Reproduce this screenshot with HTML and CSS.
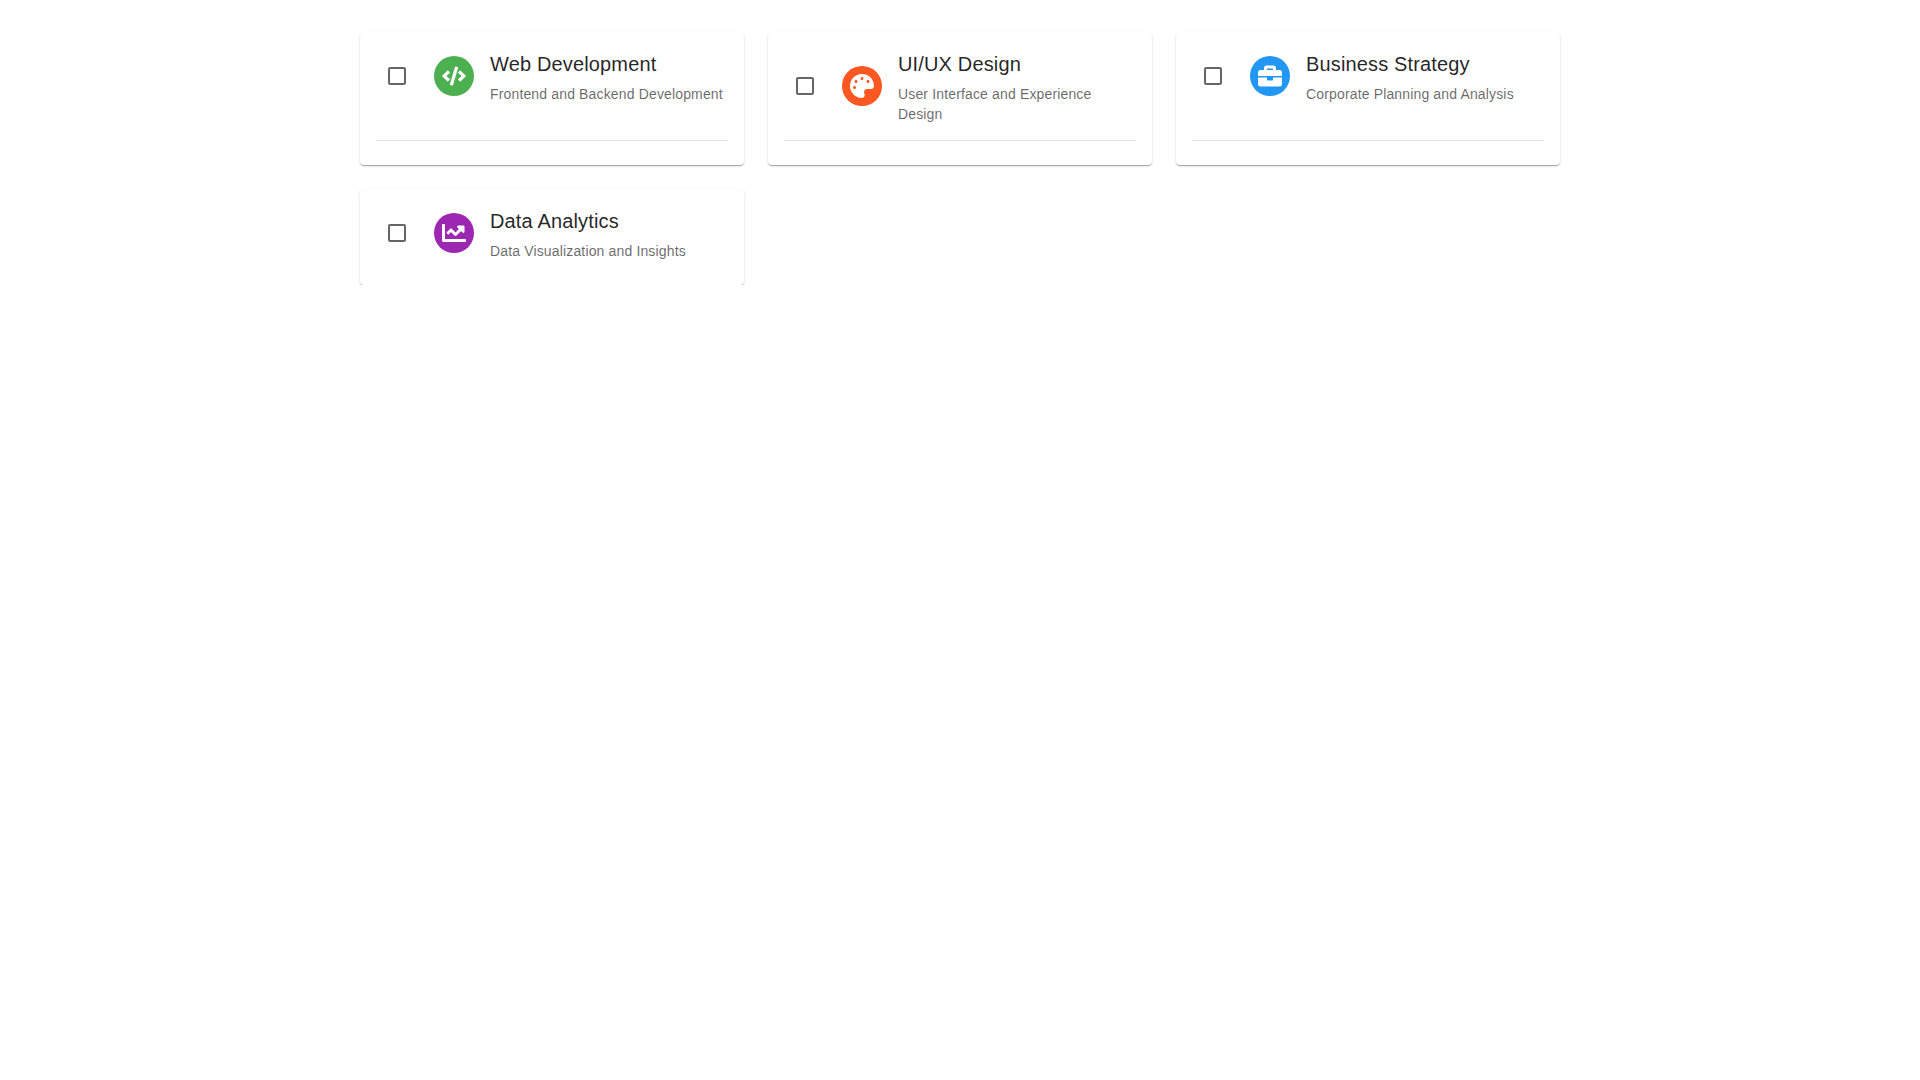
FILE: index.html
```html
<!DOCTYPE html>
<html lang="en">
<head>
<meta charset="utf-8">
<title>Skills</title>
<link rel="stylesheet" href="styles.css">
</head>
<body>
<main class="grid">
  <article class="card">
    <div class="row">
      <svg class="check" viewBox="0 0 24 24"><path d="M19 5v14H5V5h14m0-2H5c-1.1 0-2 .9-2 2v14c0 1.1.9 2 2 2h14c1.1 0 2-.9 2-2V5c0-1.1-.9-2-2-2z"/></svg>
      <div class="avatar green">
        <svg class="glyph" viewBox="0 0 640 512"><path d="M278.9 511.5l-61-17.7c-6.4-1.8-10-8.5-8.2-14.9L346.2 8.7c1.8-6.4 8.5-10 14.9-8.2l61 17.7c6.4 1.8 10 8.5 8.2 14.9L293.8 503.3c-1.9 6.4-8.5 10.1-14.9 8.2zm-114-112.2l43.5-46.4c4.6-4.9 4.3-12.7-.8-17.2L117 256l90.6-79.7c5.1-4.5 5.5-12.3.8-17.2l-43.5-46.4c-4.5-4.8-12.1-5.1-17-.5L3.8 247.2c-5.1 4.7-5.1 12.8 0 17.5l144.1 135.1c4.9 4.6 12.5 4.4 17-.5zm327.2.6l144.1-135.1c5.1-4.7 5.1-12.8 0-17.5L492.1 112.1c-4.8-4.5-12.4-4.3-17 .5L431.6 159c-4.6 4.9-4.3 12.7.8 17.2L523 256l-90.6 79.7c-5.1 4.5-5.5 12.3-.8 17.2l43.5 46.4c4.5 4.9 12.1 5.1 17 .6z"/></svg>
      </div>
      <div class="text">
        <h2 class="title">Web Development</h2>
        <p class="sub">Frontend and Backend Development</p>
      </div>
    </div>
    <hr class="divider">
  </article>
  <article class="card">
    <div class="row">
      <svg class="check" viewBox="0 0 24 24"><path d="M19 5v14H5V5h14m0-2H5c-1.1 0-2 .9-2 2v14c0 1.1.9 2 2 2h14c1.1 0 2-.9 2-2V5c0-1.1-.9-2-2-2z"/></svg>
      <div class="avatar orange">
        <svg class="glyph" viewBox="0 0 512 512"><path d="M204.3 5C104.9 24.4 24.8 104.3 5.2 203.4c-37 187 131.7 326.4 258.8 306.7 41.2-6.4 61.4-54.6 42.5-91.7-23.1-45.4 9.9-98.4 60.9-98.4h79.7c35.8 0 64.8-29.6 64.9-65.3C511.5 97.1 368.1-26.9 204.3 5zM96 320c-17.7 0-32-14.3-32-32s14.3-32 32-32 32 14.3 32 32-14.3 32-32 32zm32-128c-17.7 0-32-14.3-32-32s14.3-32 32-32 32 14.3 32 32-14.3 32-32 32zm128-64c-17.7 0-32-14.3-32-32s14.3-32 32-32 32 14.3 32 32-14.3 32-32 32zm128 64c-17.7 0-32-14.3-32-32s14.3-32 32-32 32 14.3 32 32-14.3 32-32 32z"/></svg>
      </div>
      <div class="text">
        <h2 class="title">UI/UX Design</h2>
        <p class="sub">User Interface and Experience Design</p>
      </div>
    </div>
    <hr class="divider">
  </article>
  <article class="card">
    <div class="row">
      <svg class="check" viewBox="0 0 24 24"><path d="M19 5v14H5V5h14m0-2H5c-1.1 0-2 .9-2 2v14c0 1.1.9 2 2 2h14c1.1 0 2-.9 2-2V5c0-1.1-.9-2-2-2z"/></svg>
      <div class="avatar blue">
        <svg class="glyph" viewBox="0 0 512 512"><path d="M320 336c0 8.84-7.16 16-16 16h-96c-8.84 0-16-7.16-16-16v-48H0v144c0 25.6 22.4 48 48 48h416c25.6 0 48-22.4 48-48V288H320v48zm144-208h-80V80c0-25.6-22.4-48-48-48H176c-25.6 0-48 22.4-48 48v48H48c-25.6 0-48 22.4-48 48v80h512v-80c0-25.6-22.4-48-48-48zm-144 0H192V96h128v32z"/></svg>
      </div>
      <div class="text">
        <h2 class="title">Business Strategy</h2>
        <p class="sub">Corporate Planning and Analysis</p>
      </div>
    </div>
    <hr class="divider">
  </article>
  <article class="card">
    <div class="row">
      <svg class="check" viewBox="0 0 24 24"><path d="M19 5v14H5V5h14m0-2H5c-1.1 0-2 .9-2 2v14c0 1.1.9 2 2 2h14c1.1 0 2-.9 2-2V5c0-1.1-.9-2-2-2z"/></svg>
      <div class="avatar purple">
        <svg class="glyph" viewBox="0 0 512 512"><path d="M496 384H64V80c0-8.84-7.16-16-16-16H16C7.16 64 0 71.16 0 80v336c0 17.67 14.33 32 32 32h464c8.84 0 16-7.16 16-16v-32c0-8.84-7.16-16-16-16zM464 96H345.94c-21.38 0-32.09 25.85-16.97 40.97l32.4 32.4L288 242.75l-73.37-73.37c-12.5-12.5-32.76-12.5-45.25 0l-68.69 68.69c-6.25 6.25-6.25 16.38 0 22.63l22.62 22.62c6.25 6.25 16.38 6.25 22.63 0L192 237.25l73.37 73.37c12.5 12.5 32.76 12.5 45.25 0l96-96 32.4 32.4c15.12 15.12 40.97 4.41 40.97-16.97V112c0-8.84-7.16-16-16-16z"/></svg>
      </div>
      <div class="text">
        <h2 class="title">Data Analytics</h2>
        <p class="sub">Data Visualization and Insights</p>
      </div>
    </div>
  </article>
</main>
</body>
</html>
```

FILE: styles.css
```css
html, body {
  margin: 0;
  background: #fff;
}

body {
  font-family: "Liberation Sans", Arial, sans-serif;
}

.grid {
  width: 1200px;
  margin: 0 auto;
  padding-top: 32px;
  display: grid;
  grid-template-columns: repeat(3, 1fr);
  gap: 24px;
}

.card {
  display: flex;
  flex-direction: column;
  padding: 16px 16px 24px;
  background: #fff;
  border-radius: 4px;
  box-shadow: 0 2px 1px -1px rgba(0, 0, 0, .2), 0 1px 1px 0 rgba(0, 0, 0, .14), 0 1px 3px 0 rgba(0, 0, 0, .12);
}

.row {
  display: flex;
  align-items: center;
}

.check {
  flex: none;
  width: 24px;
  height: 24px;
  margin: 0 25px 0 9px;
  fill: rgba(0, 0, 0, .6);
}

.avatar {
  flex: none;
  width: 40px;
  height: 40px;
  margin-right: 16px;
  border-radius: 50%;
  display: flex;
  align-items: center;
  justify-content: center;
}

.green { background: #4caf50; }
.orange { background: #ff5722; }
.blue { background: #2196f3; }
.purple { background: #9c27b0; }

.glyph {
  width: 24px;
  height: 24px;
  fill: #fff;
}

.text {
  min-width: 0;
}

.title {
  margin: 0 0 4px;
  font-size: 20px;
  font-weight: 400;
  line-height: 1.6;
  letter-spacing: .15px;
  color: rgba(0, 0, 0, .87);
}

.sub {
  margin: 0;
  font-size: 14px;
  line-height: 1.43;
  letter-spacing: .15px;
  color: rgba(0, 0, 0, .6);
}

.divider {
  width: 100%;
  margin: auto 0 0;
  border: 0;
  border-top: 1px solid rgba(0, 0, 0, .12);
}

.row:has(+ .divider) {
  margin-bottom: 16px;
}
```
